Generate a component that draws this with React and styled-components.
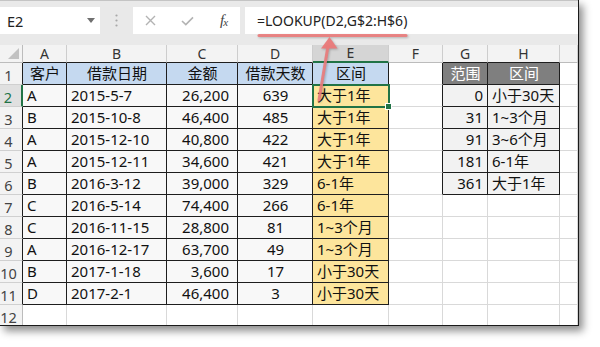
import React from 'react';
import styled, { createGlobalStyle, css } from 'styled-components';

const GlobalStyle = createGlobalStyle`
  html, body { margin: 0; padding: 0; background: #fff; }
  body { font-family: "Noto Sans", "Noto Sans CJK SC", sans-serif; }
`;

const Page = styled.div`
  width: 600px;
  height: 347px;
  background: #fff;
  overflow: hidden;
`;

const Window = styled.div`
  position: relative;
  width: 579px;
  height: 326px;
  box-sizing: border-box;
  border-right: 1px solid #1a1a1a;
  border-bottom: 1px solid #1a1a1a;
  background: #fff;
  box-shadow: 4px 5px 8px rgba(0, 0, 0, 0.45);
  display: flex;
  flex-direction: column;
  overflow: hidden;
`;

const TopStrip = styled.div`
  height: 7px;
  flex: none;
  box-sizing: border-box;
  background: #e9e9e9;
  border-top: 1px solid #c4c4c4;
`;

const Toolbar = styled.div`
  height: 27px;
  flex: none;
  display: flex;
  background: #e9e9e9;
`;

const NameBox = styled.div`
  width: 100px;
  box-sizing: border-box;
  background: #fff;
  display: flex;
  align-items: center;
  justify-content: space-between;
  padding: 0 5px 0 7px;
  font-size: 14.5px;
  color: #222;
`;

const Caret = styled.span`
  width: 0;
  height: 0;
  border-left: 4px solid transparent;
  border-right: 4px solid transparent;
  border-top: 5px solid #707070;
`;

const Grip = styled.div`
  width: 33px;
  display: flex;
  align-items: center;
  justify-content: center;
`;

const ButtonsBox = styled.div`
  width: 107px;
  background: #fff;
  display: grid;
  grid-template-columns: 34px 40px 1fr;
  align-items: center;
  justify-items: center;
`;

const Fx = styled.span`
  font-family: "Liberation Serif", "DejaVu Serif", serif;
  font-style: italic;
  font-size: 15px;
  color: #444;
  letter-spacing: -1px;
  & > sub {
    font-size: 11px;
    vertical-align: -1px;
  }
`;

const FormulaBox = styled.div`
  flex: 1;
  margin-left: 5px;
  background: #fff;
  display: flex;
  align-items: center;
  padding-left: 12px;
  font-size: 14px;
  color: #222;
`;

const Band = styled.div`
  height: 11px;
  flex: none;
  background: #e9e9e9;
`;

const Sheet = styled.div`
  flex: 1;
  display: grid;
  grid-template-columns: 23px 44px 100px 71px 75px 76px 54px 45px 72px 1fr;
  grid-template-rows: 18px repeat(12, 22px);
  overflow: hidden;
`;

const Corner = styled.div`
  box-sizing: border-box;
  background: #f3f3f3;
  border-right: 1px solid #bcbcbc;
  border-bottom: 1px solid #bcbcbc;
  display: flex;
  align-items: flex-end;
  justify-content: flex-end;
  padding: 0 3px 3px 0;
`;

const Triangle = styled.span`
  width: 0;
  height: 0;
  border-left: 11px solid transparent;
  border-bottom: 11px solid #c2c2c2;
`;

const ColHeader = styled.div`
  box-sizing: border-box;
  display: flex;
  align-items: center;
  justify-content: center;
  font-size: 14px;
  line-height: 1;
  color: #333;
  background: ${p => (p.$active ? '#d5d5d5' : '#f3f3f3')};
  border-right: 1px solid #cdcdcd;
  border-bottom: ${p => (p.$active ? '2px solid #217346' : `1px solid ${p.$bb}`)};
`;

const RowHeader = styled.div`
  box-sizing: border-box;
  display: flex;
  align-items: flex-end;
  justify-content: center;
  padding: 0 5px 2px 0;
  font-size: 14.5px;
  line-height: 1;
  color: ${p => (p.$active ? '#217346' : '#444')};
  background: ${p => (p.$active ? '#e0e0e0' : '#f3f3f3')};
  border-right: ${p => (p.$active ? '2px solid #217346' : `1px solid ${p.$rb}`)};
  border-bottom: 1px solid #d0d0d0;
`;

const Cell = styled.div`
  box-sizing: border-box;
  position: relative;
  display: flex;
  align-items: center;
  justify-content: ${p =>
    p.$align === 'right' ? 'flex-end' : p.$align === 'center' ? 'center' : 'flex-start'};
  padding: 0 ${p => (p.$align === 'right' ? p.$pr : 3)}px 0 4px;
  background: ${p => p.$bg};
  color: ${p => p.$fg};
  border-right: 1px solid ${p => p.$rb};
  border-bottom: 1px solid ${p => p.$bb};
  font-size: 15px;
  line-height: 1;
  white-space: nowrap;
  ${p =>
    p.$selected &&
    css`
      z-index: 2;
      outline: 2px solid #217346;
      outline-offset: -1px;
      &::after {
        content: '';
        position: absolute;
        right: -4px;
        bottom: -4px;
        width: 5px;
        height: 5px;
        background: #217346;
        border: 1px solid #fff;
      }
    `}
`;

const Overlay = styled.svg`
  position: absolute;
  left: 0;
  top: 0;
  z-index: 5;
  pointer-events: none;
  filter: drop-shadow(1px 1px 1px rgba(0, 0, 0, 0.25));
`;

// last column is only partly visible, so its letter is not shown
const COLS = ['A', 'B', 'C', 'D', 'E', 'F', 'G', 'H', ''];

const DATA = [
  ['A', '2015-5-7', '26,200', '639', '大于1年'],
  ['B', '2015-10-8', '46,400', '485', '大于1年'],
  ['A', '2015-12-10', '40,800', '422', '大于1年'],
  ['A', '2015-12-11', '34,600', '421', '大于1年'],
  ['B', '2016-3-12', '39,000', '329', '6-1年'],
  ['C', '2016-5-14', '74,400', '266', '6-1年'],
  ['C', '2016-11-15', '28,800', '81', '1~3个月'],
  ['A', '2016-12-17', '63,700', '49', '1~3个月'],
  ['B', '2017-1-18', '3,600', '17', '小于30天'],
  ['D', '2017-2-1', '46,400', '3', '小于30天'],
];

const LOOKUP = [
  ['0', '小于30天'],
  ['31', '1~3个月'],
  ['91', '3~6个月'],
  ['181', '6-1年'],
  ['361', '大于1年'],
];

const HEAD1 = ['客户', '借款日期', '金额', '借款天数', '区间'];
const HEAD2 = ['范围', '区间'];

const inTable = (r, c) =>
  (r >= 1 && r <= 11 && c >= 0 && c <= 4) || (r >= 1 && r <= 6 && c >= 6 && c <= 7);

function cellInfo(r, c) {
  const base = { text: '', align: 'left', bg: '#fff', fg: '#111', pr: 3 };
  if (r === 1 && c <= 4) return { ...base, text: HEAD1[c], align: 'center', bg: '#c5d9f0' };
  if (r >= 2 && r <= 11 && c <= 4) {
    const v = DATA[r - 2][c];
    if (c === 4) return { ...base, text: v, bg: '#fde59c' };
    const align = c === 2 ? 'right' : c === 3 ? 'center' : 'left';
    return { ...base, text: v, align, bg: '#f8f8f8', pr: c === 2 ? 8 : 3 };
  }
  if (r === 1 && (c === 6 || c === 7))
    return { ...base, text: HEAD2[c - 6], align: 'center', bg: '#7f7f7f', fg: '#fff' };
  if (r >= 2 && r <= 6 && c === 6)
    return { ...base, text: LOOKUP[r - 2][0], align: 'right', bg: '#f2f2f2', pr: 4 };
  if (r >= 2 && r <= 6 && c === 7)
    return { ...base, text: LOOKUP[r - 2][1], bg: '#f2f2f2' };
  return base;
}

const GRID = '#d9d9d9';
const LINE = '#1e1e1e';

function CancelIcon() {
  return (
    <svg width="11" height="11" viewBox="0 0 11 11">
      <path d="M1 1 L10 10 M10 1 L1 10" stroke="#b3b3b3" strokeWidth="1.4" fill="none" />
    </svg>
  );
}

function CheckIcon() {
  return (
    <svg width="13" height="10" viewBox="0 0 13 10">
      <path d="M1 5 L4.8 8.6 L12 1.4" stroke="#b3b3b3" strokeWidth="1.6" fill="none" />
    </svg>
  );
}

function GripIcon() {
  return (
    <svg width="3" height="13" viewBox="0 0 3 13">
      <circle cx="1.5" cy="1.5" r="1.1" fill="#a8a8a8" />
      <circle cx="1.5" cy="6.5" r="1.1" fill="#a8a8a8" />
      <circle cx="1.5" cy="11.5" r="1.1" fill="#a8a8a8" />
    </svg>
  );
}

export default function App() {
  const items = [];
  items.push(
    <Corner key="corner">
      <Triangle />
    </Corner>
  );
  COLS.forEach((l, c) => {
    items.push(
      <ColHeader key={`h${c}`} $active={c === 4} $bb={inTable(1, c) ? LINE : '#bcbcbc'}>
        {l}
      </ColHeader>
    );
  });

  for (let r = 1; r <= 12; r++) {
    items.push(
      <RowHeader key={`r${r}`} $active={r === 2} $rb={inTable(r, 0) ? LINE : '#bcbcbc'}>
        {r}
      </RowHeader>
    );
    for (let c = 0; c < COLS.length; c++) {
      const info = cellInfo(r, c);
      const rb = inTable(r, c) || inTable(r, c + 1) ? LINE : GRID;
      const bb = inTable(r, c) || inTable(r + 1, c) ? LINE : GRID;
      items.push(
        <Cell
          key={`c${r}-${c}`}
          $align={info.align}
          $bg={info.bg}
          $fg={info.fg}
          $pr={info.pr}
          $rb={rb}
          $bb={bb}
          $selected={r === 2 && c === 4}
        >
          {info.text}
        </Cell>
      );
    }
  }

  return (
    <Page>
      <GlobalStyle />
      <Window>
        <TopStrip />
        <Toolbar>
          <NameBox>
            <span>E2</span>
            <Caret />
          </NameBox>
          <Grip>
            <GripIcon />
          </Grip>
          <ButtonsBox>
            <CancelIcon />
            <CheckIcon />
            <Fx>
              f<sub>x</sub>
            </Fx>
          </ButtonsBox>
          <FormulaBox>=LOOKUP(D2,G$2:H$6)</FormulaBox>
        </Toolbar>
        <Band />
        <Sheet>{items}</Sheet>
        <Overlay width="579" height="326" viewBox="0 0 579 326">
          <line
            x1="259"
            y1="35.5"
            x2="406"
            y2="35.5"
            stroke="#ea7a7a"
            strokeOpacity="0.9"
            strokeWidth="3"
            strokeLinecap="round"
          />
          <line
            x1="319"
            y1="100"
            x2="328"
            y2="46"
            stroke="#ea7a7a"
            strokeOpacity="0.9"
            strokeWidth="3"
            strokeLinecap="round"
          />
          <polygon points="329.5,37 321,48.5 337.5,48.5" fill="#ea7a7a" fillOpacity="0.95" />
        </Overlay>
      </Window>
    </Page>
  );
}
